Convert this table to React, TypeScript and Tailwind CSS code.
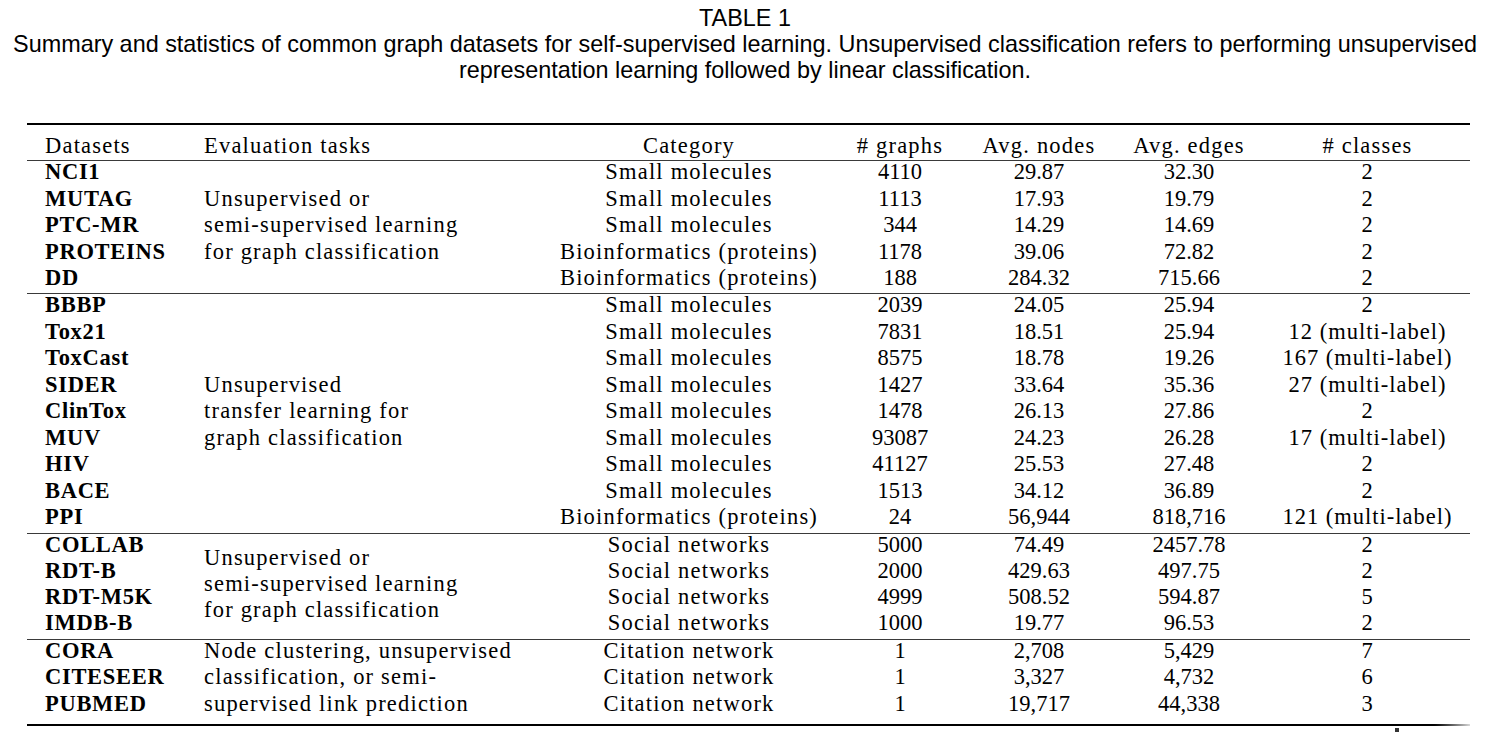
import React from "react";

const serif = { fontFamily: "'Liberation Serif', 'Times New Roman', serif" };
const sans = { fontFamily: "'Liberation Sans', Arial, sans-serif" };

type Row = [string, string, string, string, string, string];

type Group = {
  rowClass: string;
  spanClass: string;
  tasks: string[];
  rows: Row[];
};

const groups: Group[] = [
  {
    rowClass: "h-[26.45px]",
    spanClass: "row-span-5",
    tasks: ["Unsupervised or", "semi-supervised learning", "for graph classification"],
    rows: [
      ["NCI1", "Small molecules", "4110", "29.87", "32.30", "2"],
      ["MUTAG", "Small molecules", "1113", "17.93", "19.79", "2"],
      ["PTC-MR", "Small molecules", "344", "14.29", "14.69", "2"],
      ["PROTEINS", "Bioinformatics (proteins)", "1178", "39.06", "72.82", "2"],
      ["DD", "Bioinformatics (proteins)", "188", "284.32", "715.66", "2"],
    ],
  },
  {
    rowClass: "h-[26.5px]",
    spanClass: "row-span-9",
    tasks: ["Unsupervised", "transfer learning for", "graph classification"],
    rows: [
      ["BBBP", "Small molecules", "2039", "24.05", "25.94", "2"],
      ["Tox21", "Small molecules", "7831", "18.51", "25.94", "12 (multi-label)"],
      ["ToxCast", "Small molecules", "8575", "18.78", "19.26", "167 (multi-label)"],
      ["SIDER", "Small molecules", "1427", "33.64", "35.36", "27 (multi-label)"],
      ["ClinTox", "Small molecules", "1478", "26.13", "27.86", "2"],
      ["MUV", "Small molecules", "93087", "24.23", "26.28", "17 (multi-label)"],
      ["HIV", "Small molecules", "41127", "25.53", "27.48", "2"],
      ["BACE", "Small molecules", "1513", "34.12", "36.89", "2"],
      ["PPI", "Bioinformatics (proteins)", "24", "56,944", "818,716", "121 (multi-label)"],
    ],
  },
  {
    rowClass: "h-[26.15px]",
    spanClass: "row-span-4",
    tasks: ["Unsupervised or", "semi-supervised learning", "for graph classification"],
    rows: [
      ["COLLAB", "Social networks", "5000", "74.49", "2457.78", "2"],
      ["RDT-B", "Social networks", "2000", "429.63", "497.75", "2"],
      ["RDT-M5K", "Social networks", "4999", "508.52", "594.87", "5"],
      ["IMDB-B", "Social networks", "1000", "19.77", "96.53", "2"],
    ],
  },
  {
    rowClass: "h-[26.5px]",
    spanClass: "row-span-3",
    tasks: ["Node clustering, unsupervised", "classification, or semi-", "supervised link prediction"],
    rows: [
      ["CORA", "Citation network", "1", "2,708", "5,429", "7"],
      ["CITESEER", "Citation network", "1", "3,327", "4,732", "6"],
      ["PUBMED", "Citation network", "1", "19,717", "44,338", "3"],
    ],
  },
];

const cols = "grid grid-cols-[158px_358px_292px_130px_148px_152px_205px]";

const GroupBlock = ({ group }: { group: Group }) => (
  <div className={cols}>
    <div className={`col-start-2 row-start-1 ${group.spanClass} flex flex-col justify-center pl-[19px] tracking-[1.2px]`}>
      {group.tasks.map((line) => (
        <div key={line} className={`${group.rowClass} leading-[22px] whitespace-nowrap`}>
          {line}
        </div>
      ))}
    </div>
    {group.rows.map(([name, cat, graphs, nodes, edges, classes]) => (
      <React.Fragment key={name}>
        <div className={`col-start-1 ${group.rowClass} leading-[22px] pl-[18px] font-bold tracking-[0.7px] whitespace-nowrap`}>
          {name}
        </div>
        <div className={`col-start-3 ${group.rowClass} leading-[22px] text-center tracking-[1.2px] whitespace-nowrap`}>
          {cat}
        </div>
        <div className={`${group.rowClass} leading-[22px] text-center`}>{graphs}</div>
        <div className={`${group.rowClass} leading-[22px] text-center`}>{nodes}</div>
        <div className={`${group.rowClass} leading-[22px] text-center`}>{edges}</div>
        <div className={`${group.rowClass} leading-[22px] text-center tracking-[1px] whitespace-nowrap`}>
          {classes}
        </div>
      </React.Fragment>
    ))}
  </div>
);

export default function App() {
  return (
    <div className="w-[1490px] h-[744px] bg-white text-black relative overflow-hidden">
      <div style={sans} className="pt-[4.9px] text-center text-[23.4px] leading-[26px] whitespace-nowrap">
        <div>TABLE 1</div>
        <div>
          Summary and statistics of common graph datasets for self-supervised learning. Unsupervised
          classification refers to performing unsupervised
        </div>
        <div>representation learning followed by linear classification.</div>
      </div>

      <div style={serif} className="ml-[27px] mt-[40.4px] w-[1443px] text-[22.5px]">
        <div className="h-[2px] bg-black" />
        <div className={`${cols} h-[35px] pt-[9.5px] leading-[22px]`}>
          <div className="pl-[18px] tracking-[1.2px]">Datasets</div>
          <div className="pl-[19px] tracking-[1.2px]">Evaluation tasks</div>
          <div className="text-center tracking-[1.2px]">Category</div>
          <div className="text-center tracking-[1.2px]">#&nbsp;graphs</div>
          <div className="text-center tracking-[1.2px]">Avg. nodes</div>
          <div className="text-center tracking-[1.2px]">Avg. edges</div>
          <div className="text-center tracking-[1.2px]">#&nbsp;classes</div>
        </div>
        {groups.map((group, i) => (
          <React.Fragment key={i}>
            <div className="h-px bg-[#3a3a3a]" />
            <GroupBlock group={group} />
          </React.Fragment>
        ))}
        <div className="h-[5px]" />
        <div className="flex h-[2px]">
          <div className="flex-1 bg-black" />
          <div className="w-[40px] bg-linear-to-r from-black to-[#d8d8d8]" />
        </div>
      </div>

      <div className="absolute left-[1395px] top-[728px] w-[4px] h-[4px] bg-[#333]" />
    </div>
  );
}
